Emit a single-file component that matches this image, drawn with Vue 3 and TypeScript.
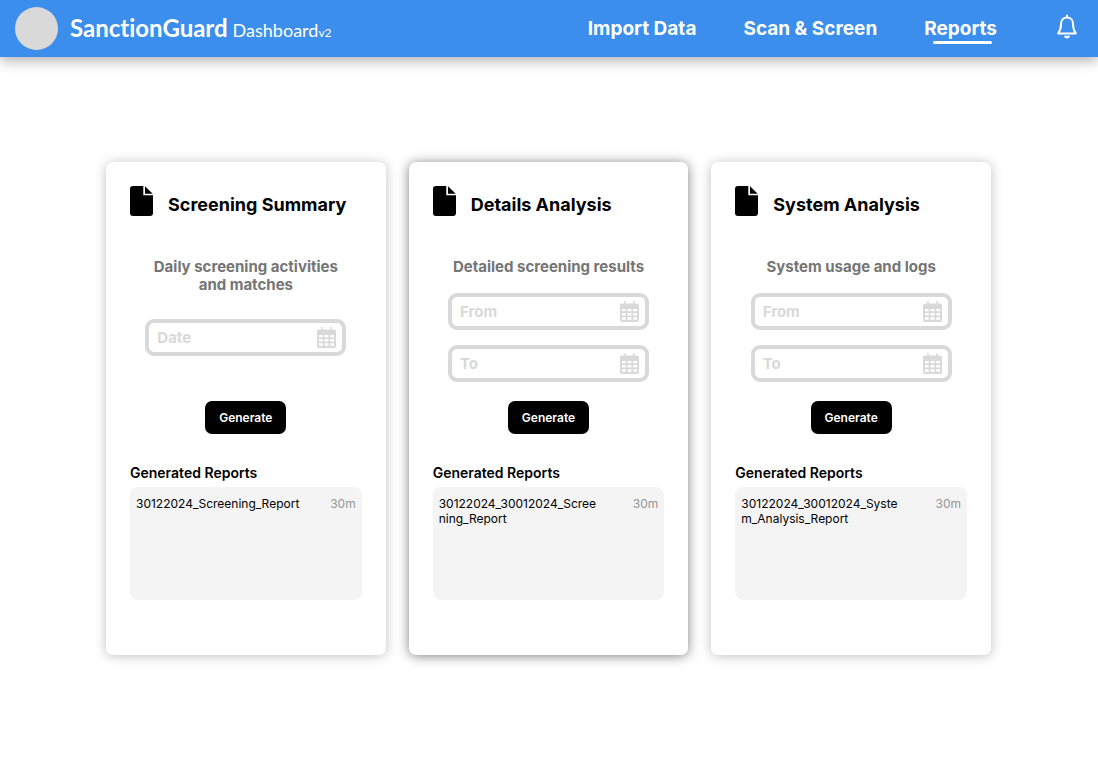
<script setup lang="ts">
import { ref } from 'vue'

interface DateField {
  id: string
  label: string
  value: string
}

interface Report {
  name: string
  age: string
}

interface ReportCard {
  id: string
  title: string
  description: string
  active: boolean
  fields: DateField[]
  reports: Report[]
}

const navItems = [
  { label: 'Import Data', href: '#import', current: false },
  { label: 'Scan & Screen', href: '#scan', current: false },
  { label: 'Reports', href: '#reports', current: true },
]

const cards = ref<ReportCard[]>([
  {
    id: 'summary',
    title: 'Screening Summary',
    description: 'Daily screening activities and matches',
    active: false,
    fields: [{ id: 'summary-date', label: 'Date', value: '' }],
    reports: [{ name: '30122024_Screening_Report', age: '30m' }],
  },
  {
    id: 'details',
    title: 'Details Analysis',
    description: 'Detailed screening results',
    active: true,
    fields: [
      { id: 'details-from', label: 'From', value: '' },
      { id: 'details-to', label: 'To', value: '' },
    ],
    reports: [{ name: '30122024_30012024_Screening_Report', age: '30m' }],
  },
  {
    id: 'system',
    title: 'System Analysis',
    description: 'System usage and logs',
    active: false,
    fields: [
      { id: 'system-from', label: 'From', value: '' },
      { id: 'system-to', label: 'To', value: '' },
    ],
    reports: [{ name: '30122024_30012024_System_Analysis_Report', age: '30m' }],
  },
])
</script>

<template>
  <header class="topbar">
    <div class="brand">
      <span class="avatar"></span>
      <p class="wordmark">
        <span class="name">SanctionGuard</span>
        <span class="product">Dashboard<span class="version">v2</span></span>
      </p>
    </div>
    <nav class="nav">
      <a
        v-for="item in navItems"
        :key="item.label"
        :href="item.href"
        class="nav-link"
        :class="{ current: item.current }"
        :aria-current="item.current ? 'page' : undefined"
        >{{ item.label }}</a
      >
      <button type="button" class="bell" aria-label="Notifications">
        <svg viewBox="0 0 22 26" width="22" height="26" fill="none">
          <path
            d="M11 1.500v2M11 3.500c-3.800 0-6 2.800-6 6.500 0 4.600-1.100 7-2.800 9.400h17.600c-1.700-2.400-2.800-4.800-2.800-9.400 0-3.700-2.200-6.500-6-6.500z"
            stroke="#fff"
            stroke-width="2"
            stroke-linecap="round"
            stroke-linejoin="round"
          />
          <path d="M8 21.800h6c-.2 1.600-1.400 2.600-3 2.600s-2.800-1-3-2.600z" fill="#fff" />
        </svg>
      </button>
    </nav>
  </header>

  <main class="cards">
    <section v-for="card in cards" :key="card.id" class="card" :class="{ active: card.active }">
      <div class="card-head">
        <svg class="doc" viewBox="0 0 23 30" width="23" height="30" aria-hidden="true">
          <path d="M3 0h10.300v9.300H23V27a3 3 0 0 1-3 3H3a3 3 0 0 1-3-3V3a3 3 0 0 1 3-3z" />
          <path d="M15 .3 22.700 7.700H15z" />
        </svg>
        <h2 class="title">{{ card.title }}</h2>
      </div>

      <form class="form" @submit.prevent>
        <p class="description">{{ card.description }}</p>
        <div class="fields">
          <label v-for="field in card.fields" :key="field.id" class="field" :for="field.id">
            <input
              :id="field.id"
              v-model="field.value"
              type="text"
              :placeholder="field.label"
              :aria-label="field.label"
            />
            <svg viewBox="0 0 19 21" width="19" height="21" aria-hidden="true">
              <path
                fill-rule="evenodd"
                d="M4.300 0h1.400v2.500h7.600V0h1.400v2.500H17a2 2 0 0 1 2 2V19a2 2 0 0 1-2 2H2a2 2 0 0 1-2-2V4.500a2 2 0 0 1 2-2h2.300z
                M2 8v2.300h3.700V8z M7.500 8v2.300h4V8z M13.300 8v2.300H17V8z
                M2 12v2.500h3.700V12z M7.500 12v2.500h4V12z M13.300 12v2.500H17V12z
                M2 16.300v2.400h3.700v-2.400z M7.500 16.300v2.400h4v-2.400z M13.300 16.300v2.400H17v-2.400z"
              />
            </svg>
          </label>
        </div>
        <button type="submit" class="generate">Generate</button>
      </form>

      <h3 class="subtitle">Generated Reports</h3>
      <ul class="reports">
        <li v-for="report in card.reports" :key="report.name" class="report">
          <span class="report-name">{{ report.name }}</span>
          <span class="report-age">{{ report.age }}</span>
        </li>
      </ul>
    </section>
  </main>
</template>

<style>
body {
  margin: 0;
  background: #fff;
  font-family: Inter, 'Liberation Sans', sans-serif;
}
</style>

<style scoped>
.topbar {
  display: flex;
  align-items: center;
  justify-content: space-between;
  height: 57px;
  padding: 0 20px 0 15px;
  background: #3c8eec;
  box-shadow: 0 4px 12px rgba(0, 0, 0, 0.3);
  color: #fff;
}

.brand {
  display: flex;
  align-items: center;
  gap: 12px;
}

.avatar {
  width: 43px;
  height: 43px;
  border-radius: 50%;
  background: #d9d9d9;
}

.wordmark {
  display: flex;
  align-items: baseline;
  gap: 5px;
  margin: 4px 0 0;
  font-family: Lato, 'Open Sans', sans-serif;
  font-variant-ligatures: none;
  line-height: 28px;
}

.name {
  font-size: 24px;
  font-weight: 700;
}

.product {
  font-size: 18px;
}

.version {
  font-size: 12px;
}

.nav {
  display: flex;
  align-items: center;
  gap: 47px;
}

.nav-link {
  position: relative;
  color: #fff;
  font-size: 19px;
  font-weight: 700;
  line-height: 22px;
  text-decoration: none;
}

.nav-link.current::after {
  content: '';
  position: absolute;
  right: 5px;
  bottom: -4px;
  left: 9px;
  height: 3px;
  border-radius: 2px;
  background: #fff;
}

.bell {
  display: flex;
  margin: 0 0 3px 12px;
  padding: 0;
  border: 0;
  background: none;
  cursor: pointer;
}

.cards {
  display: grid;
  grid-template-columns: repeat(3, 1fr);
  gap: 23px;
  padding: 105px 107px 105px 106px;
}

.card {
  padding: 24px 24px 55px;
  border-radius: 7px;
  background: #fff;
  box-shadow: 0 1px 12px rgba(0, 0, 0, 0.25);
}

.card.active {
  box-shadow: 0 1px 12px rgba(0, 0, 0, 0.5);
}

.card-head {
  display: flex;
  align-items: flex-start;
  gap: 15px;
}

.doc {
  flex: none;
}

.title {
  margin: 7px 0 0;
  font-size: 18px;
  font-weight: 700;
  line-height: 24px;
}

.form {
  display: flex;
  flex-direction: column;
  align-items: center;
  margin-top: 41px;
}

.description {
  width: 200px;
  height: 35px;
  margin: 0;
  color: #757575;
  font-size: 15px;
  font-weight: 700;
  line-height: 18px;
  text-align: center;
}

.fields {
  display: flex;
  flex-direction: column;
  justify-content: center;
  gap: 15px;
  min-height: 89px;
}

.field {
  box-sizing: border-box;
  display: flex;
  align-items: center;
  width: 201px;
  height: 37px;
  padding: 0 6px 0 8px;
  border: 4px solid #d9d9d9;
  border-radius: 9px;
}

.field input {
  flex: 1;
  min-width: 0;
  padding: 0;
  border: 0;
  outline: 0;
  background: none;
  color: #757575;
  font-family: inherit;
  font-size: 15px;
  font-weight: 700;
}

.field input::placeholder {
  color: #d9d9d9;
  opacity: 1;
}

.field svg {
  flex: none;
  fill: #d9d9d9;
}

.generate {
  width: 81px;
  height: 33px;
  margin-top: 19px;
  padding: 0;
  border: 0;
  border-radius: 7px;
  background: #000;
  color: #fff;
  font-family: inherit;
  font-size: 12px;
  font-weight: 600;
  cursor: pointer;
}

.subtitle {
  margin: 30px 0 6px;
  font-size: 14px;
  font-weight: 600;
  line-height: 17px;
}

.reports {
  box-sizing: border-box;
  min-height: 113px;
  margin: 0;
  padding: 9px 6px;
  border-radius: 8px;
  background: #f4f4f4;
  list-style: none;
}

.report {
  display: flex;
  justify-content: space-between;
  font-size: 12px;
  line-height: 15px;
}

.report-name {
  width: 164px;
  overflow-wrap: anywhere;
}

.report-age {
  color: #949494;
}
</style>
